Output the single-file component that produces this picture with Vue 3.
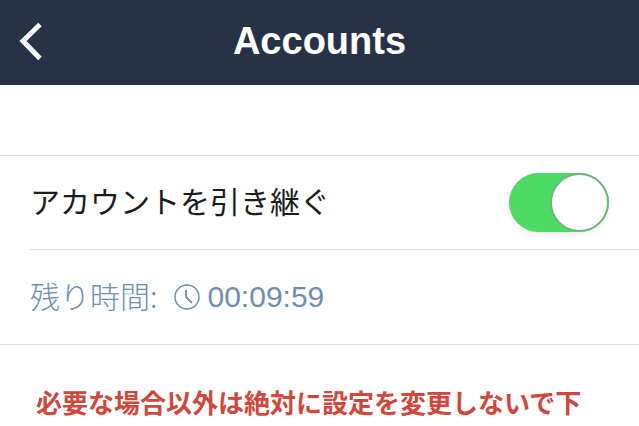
<script setup>
const title = 'Accounts'
const remaining = '00:09:59'
</script>

<template>
  <div class="screen">
    <header class="nav">
      <svg class="back" width="28" height="40" viewBox="0 0 28 40">
        <path d="M25 3.500 L8 20 L25 37.500" fill="none" stroke="#fff" stroke-width="5" />
      </svg>
      <h1>{{ title }}</h1>
    </header>

    <section class="list">
      <div class="row">
        <span class="label">アカウントを引き継ぐ</span>
        <div class="toggle"><div class="knob"></div></div>
      </div>
      <div class="row time">
        <span class="left">残り時間:</span>
        <svg class="clock" width="26" height="26" viewBox="0 0 26 26">
          <circle cx="13" cy="13" r="12" fill="none" stroke="#6d8fb0" stroke-width="1.500" />
          <path d="M12 6 L12 13 L18 19" fill="none" stroke="#6d8fb0" stroke-width="1.800" />
        </svg>
        <span class="count">{{ remaining }}</span>
      </div>
    </section>

    <p class="warn">必要な場合以外は絶対に設定を変更しないで下</p>
  </div>
</template>

<style>
html, body {
  margin: 0;
  background: #fff;
  overflow: hidden;
}
</style>

<style scoped>
.screen {
  width: 639px;
  height: 426px;
  overflow: hidden;
  background: #fff;
  font-family: "Noto Sans CJK JP", "Liberation Sans", sans-serif;
}

.nav {
  height: 85px;
  background: #283247;
  display: flex;
  align-items: center;
  justify-content: center;
  position: relative;
}

.nav h1 {
  margin: 0 0 2px;
  color: #fff;
  font-family: "Liberation Sans", sans-serif;
  font-size: 38px;
  font-weight: 700;
}

.back {
  position: absolute;
  left: 15px;
  top: 21px;
}

.list {
  margin-top: 70px;
  border-top: 1px solid #dedede;
  border-bottom: 1px solid #dedede;
}

.row {
  height: 94px;
  margin-left: 30px;
  display: flex;
  align-items: center;
  box-sizing: border-box;
}

.row:first-child {
  border-bottom: 1px solid #dedede;
  justify-content: space-between;
  padding-right: 30px;
}

.label {
  font-size: 30px;
  line-height: 40px;
  margin-top: -6px;
  color: #1c1c1c;
}

.toggle {
  width: 100px;
  height: 59px;
  border-radius: 30px;
  background: #4cd964;
  position: relative;
  box-shadow: 0 3px 6px rgba(0, 0, 0, 0.06);
}

.knob {
  position: absolute;
  right: 0;
  top: 0;
  width: 59px;
  height: 59px;
  box-sizing: border-box;
  border-radius: 50%;
  background: #fff;
  border: 2px solid #6fb47e;
}

.time {
  color: #6d8fb0;
}

.left {
  font-size: 30px;
  font-weight: 300;
  line-height: 40px;
  margin-top: -4px;
}

.clock {
  margin-left: 16px;
  margin-right: 8px;
}

.count {
  font-family: "Liberation Sans", sans-serif;
  font-size: 30px;
}

.warn {
  margin: 39px 0 0 36px;
  white-space: nowrap;
  font-size: 26px;
  line-height: 36px;
  font-weight: 700;
  color: #d0473c;
}
</style>
